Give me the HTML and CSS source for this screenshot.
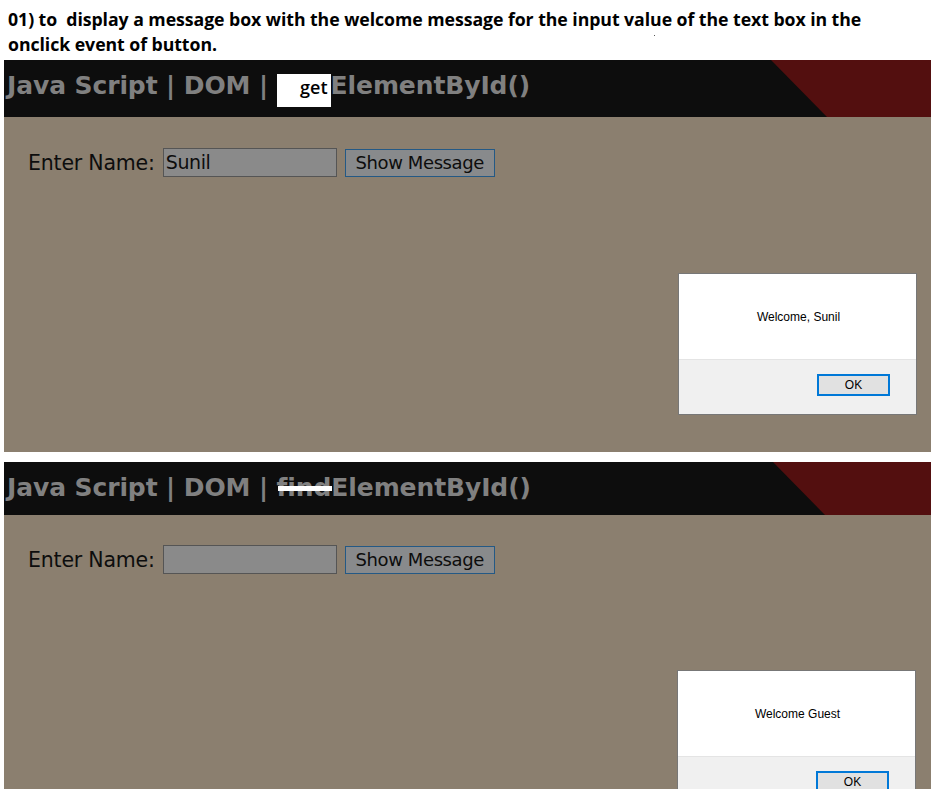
FILE: index.html
```html
<!DOCTYPE html>
<html>
<head>
<meta charset="utf-8">
<link rel="stylesheet" href="styles.css">
</head>
<body>
<p class="task">01) to&nbsp; display a message box with the welcome message for the input value of the text box in the onclick event of button.<span class="speck"></span></p>

<section class="panel panel-one">
  <header class="bar">
    <h1 class="title">Java Script | DOM | <span class="patch">get</span>ElementById()</h1>
  </header>
  <div class="stage">
    <div class="form">
      <label class="label">Enter Name:</label>
      <span class="field">Sunil</span>
      <span class="btn">Show Message</span>
    </div>
    <div class="dialog">
      <div class="dialog-msg">Welcome, Sunil</div>
      <div class="dialog-foot"><span class="ok">OK</span></div>
    </div>
  </div>
</section>

<section class="panel panel-two">
  <header class="bar">
    <h1 class="title">Java Script | DOM | <span class="struck">find</span>ElementById()</h1>
  </header>
  <div class="stage">
    <div class="form">
      <label class="label">Enter Name:</label>
      <span class="field"></span>
      <span class="btn">Show Message</span>
    </div>
    <div class="dialog">
      <div class="dialog-msg">Welcome Guest</div>
      <div class="dialog-foot"><span class="ok">OK</span></div>
    </div>
  </div>
</section>
</body>
</html>
```
FILE: styles.css
```css
html, body {
  margin: 0;
  padding: 0;
  background: #ffffff;
  overflow: hidden;
}

.task {
  margin: 0;
  padding: 7px 64px 0 8px;
  height: 60px;
  box-sizing: border-box;
  font-family: "Open Sans", "Noto Sans", sans-serif;
  font-weight: 700;
  font-size: 17.7px;
  line-height: 25px;
  color: #000;
  letter-spacing: -0.05px;
  position: relative;
}

.speck {
  position: absolute;
  left: 654px;
  top: 35px;
  width: 1px;
  height: 1px;
  background: #555;
}

.panel {
  margin-left: 4px;
}

.panel-two {
  margin-top: 10px;
}

.bar {
  position: relative;
  background: #0d0d0d;
  overflow: hidden;
  display: flex;
  align-items: center;
}

.panel-one .bar { height: 57px; }
.panel-two .bar { height: 53px; }

.bar::after {
  content: "";
  position: absolute;
  top: 0;
  right: 0;
  bottom: 0;
  width: 168px;
  background: #530f0f;
}

.panel-one .bar::after {
  clip-path: polygon(8px 0, 100% 0, 100% 100%, 64px 100%);
}

.panel-two .bar::after {
  clip-path: polygon(10px 0, 100% 0, 100% 100%, 62px 100%);
}

.title {
  margin: 0;
  padding-left: 3px;
  font-family: "DejaVu Sans", Verdana, sans-serif;
  font-weight: 700;
  font-size: 25px;
  letter-spacing: -0.1px;
  color: #808080;
  white-space: nowrap;
  position: relative;
  z-index: 1;
}

.panel-one .title { margin-top: 1px; }
.panel-two .title { margin-top: -3px; }

.patch {
  display: inline-block;
  background: #fff;
  color: #000;
  width: 54px;
  height: 33px;
  box-sizing: border-box;
  padding-right: 3px;
  text-align: right;
  font-family: "Open Sans", "Noto Sans", sans-serif;
  font-weight: 600;
  font-size: 18px;
  line-height: 27px;
  letter-spacing: 0;
  position: relative;
  top: 0;
}

.struck {
  position: relative;
}

.struck::after {
  content: "";
  position: absolute;
  left: 1px;
  width: 54px;
  top: 13px;
  height: 5px;
  background: #fff;
}

.stage {
  position: relative;
  background: #8b7f6f;
  padding: 31px 24px 0;
}

.panel-one .stage { height: 304px; }
.panel-two .stage { height: 274px; padding-top: 30px; }

.form {
  display: flex;
  align-items: center;
  gap: 8px;
  font-family: "DejaVu Sans", Tahoma, sans-serif;
  color: #0d0d0d;
}

.label {
  font-size: 20.5px;
  letter-spacing: -0.2px;
}

.field {
  width: 174px;
  height: 29px;
  box-sizing: border-box;
  background: #8a8a8a;
  border: 1px solid #555;
  padding: 0 2px;
  font-size: 19px;
  line-height: 27px;
  letter-spacing: -0.4px;
}

.btn {
  width: 150px;
  height: 28px;
  box-sizing: border-box;
  background: #888a8c;
  border: 1px solid #245985;
  text-align: center;
  font-size: 18px;
  line-height: 26px;
  letter-spacing: -0.4px;
}

.dialog {
  position: absolute;
  top: 156px;
  left: 674px;
  width: 239px;
  height: 142px;
  box-sizing: border-box;
  border: 1px solid #777;
  background: #fff;
  display: flex;
  flex-direction: column;
  font-family: "Liberation Sans", Arial, sans-serif;
  font-size: 12px;
  color: #000;
}

.panel-two .dialog {
  top: 155px;
  left: 673px;
}

.dialog-msg {
  height: 85px;
  display: flex;
  align-items: center;
  justify-content: center;
  padding-left: 2px;
}

.dialog-foot {
  flex: 1;
  background: #f0f0f0;
  border-top: 1px solid #e4e4e4;
  display: flex;
  justify-content: flex-end;
  padding: 14px 26px 0 0;
}

.ok {
  width: 73px;
  height: 22px;
  box-sizing: border-box;
  border: 2px solid #0078d7;
  background: #e1e1e1;
  text-align: center;
  line-height: 18px;
}
```
